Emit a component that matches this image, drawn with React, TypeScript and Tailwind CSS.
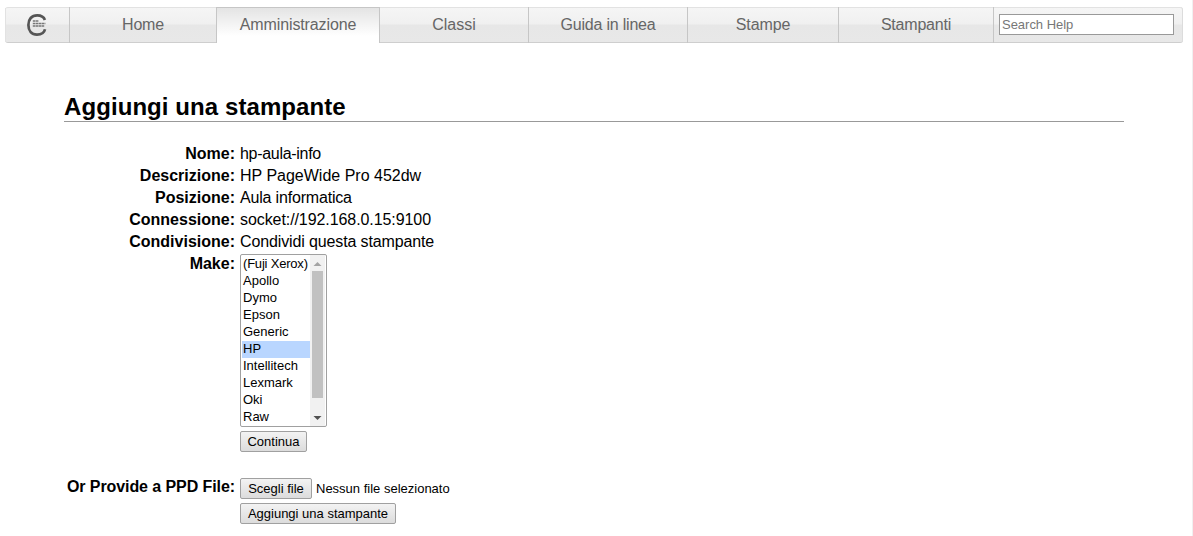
import React from "react";
import clsx from "clsx";

const tabs = [
  { label: "Home", width: "w-[147px]", text: "tracking-[-0.2px]" },
  { label: "Amministrazione", width: "w-[163px]", text: "tracking-[-0.12px]", active: true },
  { label: "Classi", width: "w-[149px]", text: "" },
  { label: "Guida in linea", width: "w-[159px]", text: "tracking-[-0.2px]" },
  { label: "Stampe", width: "w-[151px]", text: "tracking-[-0.1px]" },
  { label: "Stampanti", width: "w-[155px]", text: "tracking-[-0.2px]" },
];

const details = [
  { label: "Nome:", value: "hp-aula-info", text: "tracking-[-0.3px]" },
  { label: "Descrizione:", value: "HP PageWide Pro 452dw", text: "" },
  { label: "Posizione:", value: "Aula informatica", text: "tracking-[-0.18px]" },
  { label: "Connessione:", value: "socket://192.168.0.15:9100", text: "tracking-[-0.08px]" },
  { label: "Condivisione:", value: "Condividi questa stampante", text: "tracking-[-0.13px]" },
];

const makes = [
  "(Fuji Xerox)",
  "Apollo",
  "Dymo",
  "Epson",
  "Generic",
  "HP",
  "Intellitech",
  "Lexmark",
  "Oki",
  "Raw",
];

const Logo = () => (
  <svg className="mr-0.5" width="21" height="24" viewBox="0 0 21 24" fill="none" stroke="#555">
    <path
      d="M18.9 7C17.8 3.8 15 2.4 11.2 2.4C5.6 2.4 2.4 6.2 2.4 12C2.4 18 5.6 21.6 11 21.6C15.4 21.6 18.2 19.8 19 16.2"
      strokeWidth="2.7"
    />
    <path
      d="M6.8 7.9h5.6M6.8 10.5h12.6M6.8 13.1h11.4"
      stroke="#777"
      strokeWidth="1.5"
      strokeDasharray="2.6 0.4"
    />
  </svg>
);

interface ButtonProps {
  children: React.ReactNode;
  className?: string;
}

const Button = ({ children, className }: ButtonProps) => (
  <button
    className={clsx(
      "block h-[21px] shrink-0 whitespace-nowrap rounded-[2px] border border-[#a0a0a0] bg-linear-to-b from-[#f3f3f3] to-[#dcdcdc] text-center text-[13px] leading-[19px] text-black",
      className
    )}
  >
    {children}
  </button>
);

const Label = ({ children, className }: ButtonProps) => (
  <div className={clsx("w-[171px] shrink-0 whitespace-nowrap text-right font-bold", className)}>
    {children}
  </div>
);

const MakeList = () => (
  <div className="flex h-[173px] w-[87px] rounded-[2px] border border-[#a0a0a0] bg-white text-[13px] leading-[15px]">
    <ul className="w-[69px] shrink-0 pl-px pt-px">
      {makes.map((make) => (
        <li
          key={make}
          className={clsx(
            "h-[17px] whitespace-nowrap pl-px",
            make === "HP" && "bg-[#b9d6ff]",
            make === "(Fuji Xerox)" && "tracking-[-0.2px]"
          )}
        >
          {make}
        </li>
      ))}
    </ul>
    <div className="flex h-[171px] w-[15px] flex-col items-center bg-[#f1f1f1]">
      <svg className="shrink-0" width="15" height="16" viewBox="0 0 15 16">
        <path d="M3.5 11h8l-4-4z" fill="#a3a3a3" />
      </svg>
      <div className="h-[127px] w-[11px] bg-[#c1c1c1]" />
      <svg className="mt-[13px] shrink-0" width="15" height="14" viewBox="0 0 15 14">
        <path d="M3.5 5h8l-4 4z" fill="#505050" />
      </svg>
    </div>
  </div>
);

export default function App() {
  return (
    <div className="h-[536px] w-[1193px] overflow-hidden border-r border-[#f0f0f0] bg-white pl-[5px] pt-[7px] font-['Liberation_Sans',Arial,sans-serif] text-black">
      <nav className="flex h-9 w-[1178px] rounded-[3px] border-y border-t-[#e2e2e2] border-b-[#cecece] bg-[linear-gradient(#f5f5f5_0,#f0f0f0_16px,#e7e7e7_17px,#e8e8e8_34px)]">
        <a className="flex w-16 shrink-0 items-center justify-center border-l border-[#e2e2e2]">
          <Logo />
        </a>
        {tabs.map(({ label, width, text, active }) => (
          <a
            key={label}
            className={clsx(
              "-my-px h-9 shrink-0 border-l border-[#c6c6c6] text-center text-base text-[#666]",
              width,
              text,
              active
                ? "border-t bg-linear-to-b from-[#e4e4e4] to-white to-80% leading-[34px]"
                : "leading-9"
            )}
          >
            {label}
          </a>
        ))}
        <div className="-my-px flex h-9 flex-1 rounded-r-[3px] border-l border-r border-l-[#c6c6c6] border-r-[#dcdcdc] pl-[5px] pt-[7px]">
          <input
            type="text"
            placeholder="Search Help"
            className="h-[21px] w-[175px] border border-[#999] bg-white px-0.5 text-[13px] tracking-[-0.02px] placeholder:text-[#777]"
          />
        </div>
      </nav>

      <main className="ml-[59px] mt-[49px] w-[1060px]">
        <h1 className="h-[30px] border-b border-[#999] text-2xl leading-[30px] font-bold tracking-[0.08px]">
          Aggiungi una stampante
        </h1>

        <div className="mt-[21px] text-base leading-[22px]">
          {details.map(({ label, value, text }) => (
            <div key={label} className="flex gap-[5px]">
              <Label>{label}</Label>
              <div className={text}>{value}</div>
            </div>
          ))}
          <div className="flex gap-[5px]">
            <Label>Make:</Label>
            <div className="pt-px">
              <MakeList />
              <Button className="mt-1 w-[67px]">Continua</Button>
            </div>
          </div>
          <div className="mt-[23px] flex gap-[5px]">
            <Label className="pt-px tracking-[-0.08px]">Or Provide a PPD File:</Label>
            <div className="pt-[3px]">
              <div className="flex gap-1 text-[13px] leading-[21px]">
                <Button className="w-[72px]">Scegli file</Button>
                <span>Nessun file selezionato</span>
              </div>
              <Button className="mt-1 w-[156px]">Aggiungi una stampante</Button>
            </div>
          </div>
        </div>
      </main>
    </div>
  );
}
